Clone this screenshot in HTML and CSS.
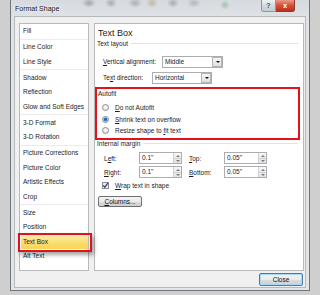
FILE: index.html
```html
<!DOCTYPE html>
<html lang="en">
<head>
	<meta charset="UTF-8">
	<title>Format Shape</title>
	<link rel="stylesheet" href="styles.css">
</head>
<body>
<div class="window">
	<div class="titlebar">
		<span class="title">Format Shape</span>
		<div class="caption">
			<span class="help">?</span>
			<span class="close">x</span>
		</div>
	</div>
	<div class="client">
		<div class="panes">
			<ul class="nav">
				<li>Fill</li>
				<li class="sep"></li>
				<li>Line Color</li>
				<li>Line Style</li>
				<li class="sep"></li>
				<li>Shadow</li>
				<li>Reflection</li>
				<li>Glow and Soft Edges</li>
				<li class="sep"></li>
				<li>3-D Format</li>
				<li>3-D Rotation</li>
				<li class="sep"></li>
				<li>Picture Corrections</li>
				<li>Picture Color</li>
				<li>Artistic Effects</li>
				<li>Crop</li>
				<li class="sep"></li>
				<li>Size</li>
				<li>Position</li>
				<li class="current">Text Box</li>
				<li>Alt Text</li>
			</ul>
			<div class="page">
				<h1 class="heading">Text Box</h1>
				<div class="group">Text layout</div>
				<div class="layout">
					<div class="row">
						<label class="lbl-valign"><u>V</u>ertical alignment:</label>
						<div class="select w61"><span>Middle</span><i class="arrow"></i></div>
					</div>
					<div class="row">
						<label class="lbl-dir">Te<u>x</u>t direction:</label>
						<div class="select w60"><span>Horizontal</span><i class="arrow"></i></div>
					</div>
				</div>
				<div class="mark">
					<div class="group plain">Autofit</div>
					<div class="option"><i class="radio"></i><span><u>D</u>o not Autofit</span></div>
					<div class="option"><i class="radio on"></i><span><u>S</u>hrink text on overflow</span></div>
					<div class="option"><i class="radio"></i><span>Resize shape to <u>f</u>it text</span></div>
				</div>
				<div class="group margin-head">Internal margin</div>
				<div class="margins">
					<label>L<u>e</u>ft:</label>
					<div class="spinbox"><span>0.1"</span><i class="spin"><b class="up"></b><b class="down"></b></i></div>
					<label><u>T</u>op:</label>
					<div class="spinbox"><span>0.05"</span><i class="spin"><b class="up"></b><b class="down"></b></i></div>
					<label><u>R</u>ight:</label>
					<div class="spinbox"><span>0.1"</span><i class="spin"><b class="up"></b><b class="down"></b></i></div>
					<label><u>B</u>ottom:</label>
					<div class="spinbox"><span>0.05"</span><i class="spin"><b class="up"></b><b class="down"></b></i></div>
				</div>
				<div class="option check-row">
					<i class="check"><svg width="7" height="7" viewBox="0 0 7 7"><path d="M1.2 3.4 L2.8 5.2 L5.9 1.2" fill="none" stroke="#2b3f7a" stroke-width="1.2"/></svg></i><span><u>W</u>rap text in shape</span>
				</div>
				<button class="btn columns"><u>C</u>olumns...</button>
			</div>
		</div>
		<div class="footer">
			<button class="btn default">Close</button>
		</div>
	</div>
</div>
</body>
</html>
```

FILE: styles.css
```css
* {
	margin: 0;
	padding: 0;
	box-sizing: border-box;
}

ul {
	list-style: none;
}

body {
	background: #cfcfcf;
	font-family: "Liberation Sans", Arial, sans-serif;
	font-size: 6.5px;
	color: #1b1b1b;
}

u {
	text-decoration: underline;
	text-underline-offset: 1px;
}

/* window frame */
.window {
	width: 300px;
	height: 291px;
	margin-left: 10px;
	border: 1px solid #707478;
	border-top: 0;
	background:
		radial-gradient(ellipse 7px 5px at 78px 3px, rgba(60, 60, 60, .35), transparent),
		radial-gradient(ellipse 6px 5px at 100px 3px, rgba(60, 60, 60, .3), transparent),
		radial-gradient(ellipse 7px 5px at 124px 3px, rgba(70, 70, 70, .3), transparent),
		radial-gradient(ellipse 6px 5px at 141px 3px, rgba(150, 120, 40, .35), transparent),
		radial-gradient(ellipse 6px 5px at 162px 3px, rgba(60, 60, 60, .3), transparent),
		radial-gradient(ellipse 7px 5px at 183px 3px, rgba(70, 70, 70, .25), transparent),
		radial-gradient(ellipse 5px 5px at 214px 5px, rgba(60, 150, 60, .35), transparent),
		linear-gradient(#d6dadf, #e1e4e7 20px, #e2e5e8);
	display: flex;
	flex-direction: column;
}

.titlebar {
	height: 16px;
	display: flex;
	align-items: flex-start;
	padding-left: 4px;
}

.title {
	font-size: 7px;
	line-height: 8px;
	margin-top: 5px;
	color: #111;
	text-shadow: 0 0 3px #fff, 0 0 3px #fff;
}

.caption {
	margin-left: auto;
	margin-right: 14px;
	display: flex;
}

.caption span {
	height: 12px;
	text-align: center;
	line-height: 11px;
	font-weight: bold;
}

.help {
	width: 15px;
	border: 1px solid #8f98a2;
	border-top: 0;
	border-radius: 0 0 0 3px;
	background: linear-gradient(#eef1f4, #d3d9df 50%, #c4ccd4);
	color: #4a5562;
	font-size: 7px;
}

.close {
	width: 19px;
	border: 1px solid #8e3b2e;
	border-top: 0;
	border-left: 0;
	border-radius: 0 0 3px 0;
	background: linear-gradient(#e99a88, #d2503a 50%, #bd2f18);
	color: #fff;
	font-size: 7.5px;
}

/* client area */
.client {
	flex: 1;
	margin: 0 3px 2px 3px;
	background: #f0f0f0;
	border: 1px solid #b5b9bd;
	padding: 6px 1px 0 4px;
}

.panes {
	display: flex;
	gap: 5px;
	height: 248px;
}

.nav {
	width: 70px;
	background: #fff;
	border: 1px solid #b9b9b9;
}

.nav li {
	line-height: 14.5px;
	padding-left: 3px;
	white-space: nowrap;
}

.nav li.sep {
	height: 1.5px;
	border-top: 1px solid #ececec;
}

.nav li.current {
	position: relative;
	margin-left: 1px;
	padding-left: 2px;
	line-height: 14px;
	margin-bottom: .5px;
	background: linear-gradient(#fdeeb0, #fbdc6a 60%, #f9d458);
	border-radius: 1px;
}

.nav li.current::after {
	content: "";
	position: absolute;
	left: -3px;
	right: -4px;
	top: -2px;
	bottom: -3px;
	border: 2px solid #e2121b;
	box-shadow: 2px 3px 4px rgba(0, 0, 0, .35);
}

/* right page */
.page {
	width: 210px;
	background: #fff;
	border: 1px solid #b9b9b9;
	padding: 3px 1px 0 0;
}

.heading {
	font-size: 9px;
	font-weight: normal;
	line-height: 12px;
	margin-left: 3px;
	color: #222;
}

.group {
	display: flex;
	align-items: center;
	line-height: 9px;
	margin-left: 2px;
}

.group::after {
	content: "";
	flex: 1;
	margin: 0 4px 0 3px;
	border-top: 1px solid #dde3e8;
}

.group.plain::after {
	display: none;
}

.layout {
	margin: 7.5px 0 0 8px;
}

.row {
	display: flex;
	align-items: center;
	height: 12px;
	margin-bottom: 4px;
}

.lbl-valign {
	width: 59px;
}

.lbl-dir {
	width: 49px;
}

.select {
	display: flex;
	height: 12px;
	border: 1px solid #abadb3;
	background: #fff;
}

.select span {
	padding-left: 2px;
	line-height: 10px;
}

.w61 {
	width: 61px;
}

.w60 {
	width: 60px;
}

.arrow {
	width: 10px;
	margin-left: auto;
	border: 1px solid #b4b4b4;
	background: linear-gradient(#f7f7f7, #dedede);
	position: relative;
}

.arrow::after {
	content: "";
	position: absolute;
	left: 2.5px;
	top: 3.5px;
	border-left: 2px solid transparent;
	border-right: 2px solid transparent;
	border-top: 2.5px solid #111;
}

/* red annotation round autofit */
.mark {
	margin: -0.5px 2px 0 0;
	border: 2px solid #e2121b;
	height: 53px;
	padding-top: 0;
}

.mark .group {
	margin-left: 1px;
}

.option {
	display: flex;
	align-items: center;
	height: 11.5px;
	padding-left: 4.5px;
	white-space: pre;
}

.mark .group + .option {
	margin-top: 4px;
}

.radio {
	width: 7px;
	height: 7px;
	border-radius: 50%;
	border: 1px solid #8d8d8d;
	background: radial-gradient(circle at 50% 40%, #fff, #dadada);
	margin-right: 6.5px;
}

.radio.on {
	background: radial-gradient(circle, #0f4c9a 0, #2f78c8 1.3px, #9fc0e4 2px, #eeeeee 2.6px);
}

.margin-head {
	margin-top: -1.5px;
}

.margins {
	display: grid;
	grid-template-columns: 28px 43px 28px 43px;
	grid-auto-rows: 12px;
	column-gap: 7px;
	row-gap: 2px;
	align-items: center;
	margin: 4.5px 0 0 9px;
}

.spinbox {
	display: flex;
	height: 12px;
	border: 1px solid #abadb3;
	background: #fff;
}

.spinbox span {
	padding-left: 2px;
	line-height: 10px;
}

.spin {
	width: 8px;
	margin-left: auto;
	border-left: 1px solid #d0d0d0;
	background: linear-gradient(#f7f7f7, #e3e3e3);
	display: flex;
	flex-direction: column;
}

.spin b {
	flex: 1;
	position: relative;
}

.spin b.up {
	border-bottom: 1px solid #d0d0d0;
}

.spin b::after {
	content: "";
	position: absolute;
	left: 1.5px;
	top: 1.5px;
	border-left: 2px solid transparent;
	border-right: 2px solid transparent;
}

.spin b.up::after {
	border-bottom: 2px solid #7a7a7a;
}

.spin b.down::after {
	border-top: 2px solid #7a7a7a;
}

.check-row {
	height: 10px;
	margin-top: 2px;
	padding-left: 6.5px;
}

.check {
	width: 7px;
	height: 7px;
	border: 1px solid #8d8d8d;
	background: linear-gradient(#e9e9e9, #fafafa);
	margin-right: 6.5px;
	display: flex;
	align-items: center;
	justify-content: center;
}

.check svg {
	flex: none;
}

.btn {
	font-family: inherit;
	font-size: 6.5px;
	color: #111;
	height: 11px;
	border: 1px solid #707070;
	border-radius: 2px;
	background: linear-gradient(#f3f3f3, #ebebeb 50%, #dddddd 50%, #cfcfcf);
}

.columns {
	display: block;
	width: 44px;
	margin: 6px 0 0 3px;
}

.footer {
	display: flex;
	justify-content: flex-end;
	margin-top: 2px;
	padding-right: 1px;
}

.default {
	width: 44px;
	height: 13px;
	border-color: #3c7fb1;
	box-shadow: inset 0 0 0 1px #a7d8f5;
}
```
